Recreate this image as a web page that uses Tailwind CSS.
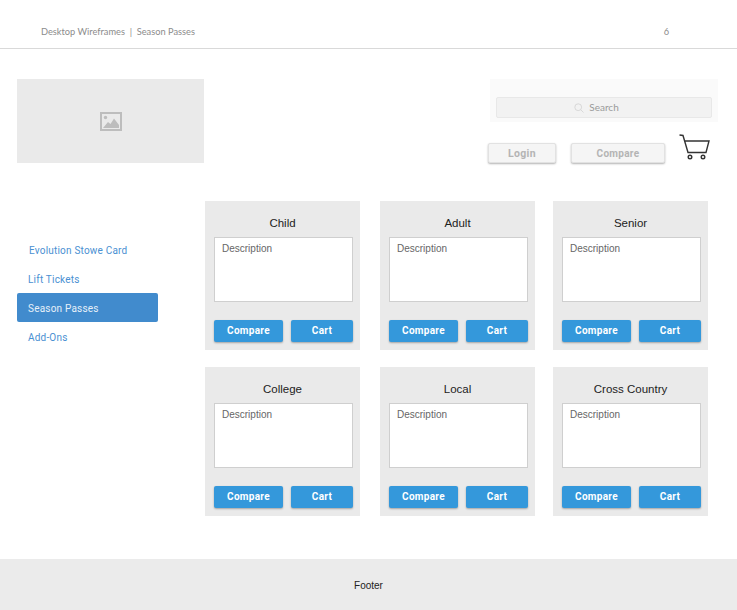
<!DOCTYPE html>
<html lang="en">
<head>
  <meta charset="UTF-8" />
  <meta name="viewport" content="width=device-width, initial-scale=1.0"/>
  <title>Season Passes</title>
  <script src="https://cdn.jsdelivr.net/npm/@tailwindcss/browser@4"></script>
</head>
<body class="bg-white font-['Liberation_Sans',sans-serif]">
  <div class="w-[737px] h-[610px] flex flex-col overflow-hidden">

    <header class="h-[49px] shrink-0 border-b border-[#d9d9d9] flex items-center justify-between pl-[41px] pr-[68px] pt-[15px] font-['Lato',sans-serif] text-[9.25px] text-[#8c8c8c]">
      <span>Desktop Wireframes&nbsp; |&nbsp; Season Passes</span>
      <span>6</span>
    </header>

    <div class="h-[152px] shrink-0 flex pl-[17px] pt-[30px]">
      <div class="w-[187px] h-[84px] bg-[#eaeaea] flex items-center justify-center">
        <svg width="22" height="19" viewBox="0 0 22 19">
          <rect x="1" y="1" width="20" height="17" fill="none" stroke="#bdbdbd" stroke-width="2"/>
          <circle cx="5.5" cy="5.5" r="1.7" fill="#bdbdbd"/>
          <path d="M3 16 L8 10 L10.5 12 L14 6.5 L19 13 V16 Z" fill="#bdbdbd"/>
        </svg>
      </div>
      <div class="w-[514px] flex flex-col items-end">
        <div class="w-[228px] h-[43px] bg-[#fafafa] flex items-end justify-center pb-[4px]">
          <div class="w-[216px] h-[21px] pr-[15px] bg-[#f2f2f2] border border-[#e8e8e8] rounded-[2px] flex items-center justify-center gap-[5px] font-['Lato',sans-serif] text-[10px] text-[#9a9a9a]">
            <svg width="10" height="10" viewBox="0 0 10 10" fill="none" stroke="#d0d0d0" stroke-width="0.8">
              <circle cx="4.2" cy="4.2" r="3.4"/>
              <path d="M6.8 6.8 L9.5 9.5"/>
            </svg>
            Search
          </div>
        </div>
        <div class="w-[230px] flex gap-[15px] mt-[21px] relative">
          <button class="w-[68px] h-[20px] pt-[1px] bg-[#f5f5f5] border border-[#e2e2e2] rounded-[2px] shadow-[0_1px_2px_rgba(0,0,0,0.3)] text-[10.5px] font-bold text-[#b4b4b4] font-['Roboto',sans-serif] tracking-[0.3px]">Login</button>
          <button class="w-[94px] h-[20px] bg-[#f5f5f5] border border-[#e2e2e2] rounded-[2px] shadow-[0_1px_2px_rgba(0,0,0,0.3)] text-[10px] font-bold text-[#b4b4b4] font-['Roboto',sans-serif] tracking-[0.3px]">Compare</button>
          <svg class="absolute left-[191px] top-[-10px]" width="32" height="29" viewBox="0 0 32 29" fill="none" stroke="#333333" stroke-width="1.4">
            <path d="M0.5 2 L4 2.5 L9 19.5 H27 L30 8 H5.5"/>
            <circle cx="11" cy="24" r="1.8"/>
            <circle cx="24" cy="24" r="1.8"/>
          </svg>
        </div>
      </div>
    </div>

    <div class="flex pl-[17px] h-[358px] shrink-0">
      <nav class="w-[188px] shrink-0 flex flex-col pt-[35px] font-['Roboto',sans-serif] text-[10px] text-[#4a90d2] tracking-[0.2px]">
        <a class="h-[29px] flex items-center pl-[12px]">Evolution Stowe Card</a>
        <a class="h-[28px] flex items-center pl-[11px]">Lift Tickets</a>
        <a class="w-[141px] h-[29px] pt-[1px] flex items-center pl-[11px] bg-[#418bcd] text-[#e6f0f9] rounded-[2px]">Season Passes</a>
        <a class="h-[30px] flex items-center pl-[11px]">Add-Ons</a>
      </nav>

      <div class="grid grid-cols-[155px_155px_155px] gap-x-[20px] gap-y-[17px] content-start [&>*:nth-child(3n)]:ml-[-2px]">

        <section class="w-[155px] h-[149px] bg-[#eaeaea] flex flex-col pl-[9px] pr-[7px]">
          <h2 class="h-[36px] pt-[15px] pr-[2px] text-center text-[11.5px] leading-[14px] text-[#222222]">Child</h2>
          <div class="h-[65px] bg-white border border-[#cfcfcf] px-[7px] pt-[5px] text-[10px] leading-[12px] text-[#666666]">Description</div>
          <div class="flex gap-[8px] mt-[18px]">
            <button class="w-[69px] h-[22px] pb-[1px] bg-[#3498db] rounded-[2px] shadow-[0_1px_2px_rgba(0,0,0,0.3)] text-white text-[10px] font-bold font-['Roboto',sans-serif] tracking-[0.3px]">Compare</button>
            <button class="w-[62px] h-[22px] pb-[1px] bg-[#3498db] rounded-[2px] shadow-[0_1px_2px_rgba(0,0,0,0.3)] text-white text-[10px] font-bold font-['Roboto',sans-serif] tracking-[0.3px]">Cart</button>
          </div>
        </section>

        <section class="w-[155px] h-[149px] bg-[#eaeaea] flex flex-col pl-[9px] pr-[7px]">
          <h2 class="h-[36px] pt-[15px] pr-[2px] text-center text-[11.5px] leading-[14px] text-[#222222]">Adult</h2>
          <div class="h-[65px] bg-white border border-[#cfcfcf] px-[7px] pt-[5px] text-[10px] leading-[12px] text-[#666666]">Description</div>
          <div class="flex gap-[8px] mt-[18px]">
            <button class="w-[69px] h-[22px] pb-[1px] bg-[#3498db] rounded-[2px] shadow-[0_1px_2px_rgba(0,0,0,0.3)] text-white text-[10px] font-bold font-['Roboto',sans-serif] tracking-[0.3px]">Compare</button>
            <button class="w-[62px] h-[22px] pb-[1px] bg-[#3498db] rounded-[2px] shadow-[0_1px_2px_rgba(0,0,0,0.3)] text-white text-[10px] font-bold font-['Roboto',sans-serif] tracking-[0.3px]">Cart</button>
          </div>
        </section>

        <section class="w-[155px] h-[149px] bg-[#eaeaea] flex flex-col pl-[9px] pr-[7px]">
          <h2 class="h-[36px] pt-[15px] pr-[2px] text-center text-[11.5px] leading-[14px] text-[#222222]">Senior</h2>
          <div class="h-[65px] bg-white border border-[#cfcfcf] px-[7px] pt-[5px] text-[10px] leading-[12px] text-[#666666]">Description</div>
          <div class="flex gap-[8px] mt-[18px]">
            <button class="w-[69px] h-[22px] pb-[1px] bg-[#3498db] rounded-[2px] shadow-[0_1px_2px_rgba(0,0,0,0.3)] text-white text-[10px] font-bold font-['Roboto',sans-serif] tracking-[0.3px]">Compare</button>
            <button class="w-[62px] h-[22px] pb-[1px] bg-[#3498db] rounded-[2px] shadow-[0_1px_2px_rgba(0,0,0,0.3)] text-white text-[10px] font-bold font-['Roboto',sans-serif] tracking-[0.3px]">Cart</button>
          </div>
        </section>

        <section class="w-[155px] h-[149px] bg-[#eaeaea] flex flex-col pl-[9px] pr-[7px]">
          <h2 class="h-[36px] pt-[15px] pr-[2px] text-center text-[11.5px] leading-[14px] text-[#222222]">College</h2>
          <div class="h-[65px] bg-white border border-[#cfcfcf] px-[7px] pt-[5px] text-[10px] leading-[12px] text-[#666666]">Description</div>
          <div class="flex gap-[8px] mt-[18px]">
            <button class="w-[69px] h-[22px] pb-[1px] bg-[#3498db] rounded-[2px] shadow-[0_1px_2px_rgba(0,0,0,0.3)] text-white text-[10px] font-bold font-['Roboto',sans-serif] tracking-[0.3px]">Compare</button>
            <button class="w-[62px] h-[22px] pb-[1px] bg-[#3498db] rounded-[2px] shadow-[0_1px_2px_rgba(0,0,0,0.3)] text-white text-[10px] font-bold font-['Roboto',sans-serif] tracking-[0.3px]">Cart</button>
          </div>
        </section>

        <section class="w-[155px] h-[149px] bg-[#eaeaea] flex flex-col pl-[9px] pr-[7px]">
          <h2 class="h-[36px] pt-[15px] pr-[2px] text-center text-[11.5px] leading-[14px] text-[#222222]">Local</h2>
          <div class="h-[65px] bg-white border border-[#cfcfcf] px-[7px] pt-[5px] text-[10px] leading-[12px] text-[#666666]">Description</div>
          <div class="flex gap-[8px] mt-[18px]">
            <button class="w-[69px] h-[22px] pb-[1px] bg-[#3498db] rounded-[2px] shadow-[0_1px_2px_rgba(0,0,0,0.3)] text-white text-[10px] font-bold font-['Roboto',sans-serif] tracking-[0.3px]">Compare</button>
            <button class="w-[62px] h-[22px] pb-[1px] bg-[#3498db] rounded-[2px] shadow-[0_1px_2px_rgba(0,0,0,0.3)] text-white text-[10px] font-bold font-['Roboto',sans-serif] tracking-[0.3px]">Cart</button>
          </div>
        </section>

        <section class="w-[155px] h-[149px] bg-[#eaeaea] flex flex-col pl-[9px] pr-[7px]">
          <h2 class="h-[36px] pt-[15px] pr-[2px] text-center text-[11.5px] leading-[14px] text-[#222222]">Cross Country</h2>
          <div class="h-[65px] bg-white border border-[#cfcfcf] px-[7px] pt-[5px] text-[10px] leading-[12px] text-[#666666]">Description</div>
          <div class="flex gap-[8px] mt-[18px]">
            <button class="w-[69px] h-[22px] pb-[1px] bg-[#3498db] rounded-[2px] shadow-[0_1px_2px_rgba(0,0,0,0.3)] text-white text-[10px] font-bold font-['Roboto',sans-serif] tracking-[0.3px]">Compare</button>
            <button class="w-[62px] h-[22px] pb-[1px] bg-[#3498db] rounded-[2px] shadow-[0_1px_2px_rgba(0,0,0,0.3)] text-white text-[10px] font-bold font-['Roboto',sans-serif] tracking-[0.3px]">Cart</button>
          </div>
        </section>
      </div>
    </div>

    <footer class="flex-1 bg-[#ebebeb] flex items-center justify-center pt-[2px] text-[10px] text-[#222222]">Footer</footer>
  </div>
</body>
</html>
